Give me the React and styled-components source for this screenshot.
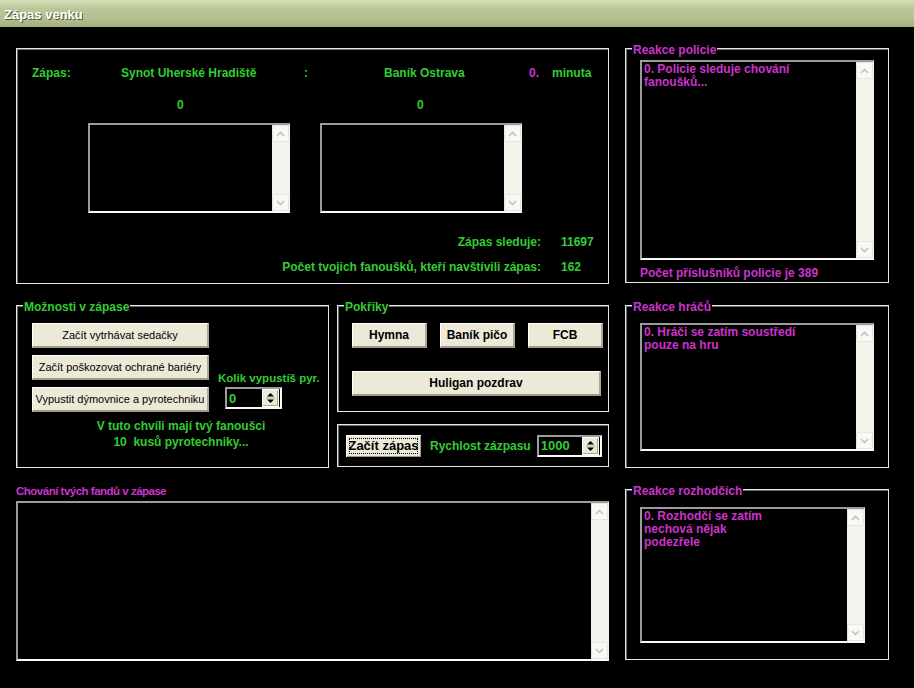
import React from "react";
import styled, { createGlobalStyle } from "styled-components";

const GREEN = "#33cc33";
const MAGENTA = "#cc33cc";

const Global = createGlobalStyle`
  html, body { margin: 0; padding: 0; background: #000; }
  body { font-family: "Liberation Sans", Arial, sans-serif; }
`;

const Window = styled.div`
  width: 914px;
  height: 688px;
  background: #000;
  display: flex;
  flex-direction: column;
  overflow: hidden;
`;

const TitleBar = styled.div`
  height: 27px;
  flex: none;
  box-sizing: border-box;
  display: flex;
  align-items: center;
  padding: 1px 0 0 4px;
  background: linear-gradient(180deg, #d6dfb8 0%, #bcc799 30%, #b3c08f 70%, #a3b07d 100%);
  color: #fff;
  font: bold 13px "Liberation Sans", Arial, sans-serif;
  text-shadow: 1px 1px 0 #4d5530;
`;

const Body = styled.div`
  display: flex;
  gap: 16px;
  padding: 21px 0 0 16px;
`;

const Column = styled.div`
  width: ${(p) => p.$w}px;
  display: flex;
  flex-direction: column;
`;

const Group = styled.div`
  position: relative;
  box-sizing: border-box;
  width: ${(p) => (p.$w ? `${p.$w}px` : "auto")};
  height: ${(p) => p.$h}px;
  margin-top: ${(p) => p.$mt || 0}px;
  border: 1px solid #e6e6e6;
  box-shadow: inset 1px 1px 0 #6a6a6a;
  padding: ${(p) => p.$pad || "0"};
  display: flex;
  flex-direction: column;
  flex: none;
`;

const Legend = styled.span`
  position: absolute;
  top: -6px;
  left: 6px;
  background: #000;
  padding: 0 1px;
  font: bold 12px/14px "Liberation Sans", Arial, sans-serif;
  color: ${(p) => p.$c};
`;

const Label = styled.span`
  font: bold 12px/14px "Liberation Sans", Arial, sans-serif;
  color: ${(p) => p.$c || GREEN};
  white-space: nowrap;
`;

/* Match panel */
const MatchRow = styled.div`
  display: grid;
  grid-template-columns: 89px 183px 80px 145px 23px auto;
  height: 14px;
`;

const ScoreRow = styled.div`
  display: grid;
  grid-template-columns: 202px 202px;
  column-gap: 30px;
  margin: 18px 0 0 56px;
`;

const Score = styled(Label)`
  padding-left: ${(p) => p.$off}px;
`;

const BoxRow = styled.div`
  display: flex;
  gap: 30px;
  margin: 11px 0 0 56px;
`;

const Stats = styled.div`
  display: grid;
  grid-template-columns: 509px auto;
  column-gap: 20px;
  row-gap: 11px;
  margin-top: 22px;
`;

const StatLabel = styled(Label)`
  text-align: right;
`;

/* List box */
const ListBox = styled.div`
  box-sizing: border-box;
  width: ${(p) => p.$w}px;
  height: ${(p) => p.$h}px;
  margin-top: ${(p) => p.$mt || 0}px;
  flex: none;
  display: flex;
  background: #000;
  border-style: solid;
  border-width: 2px 1px 2px 2px;
  border-color: #9c9c9c #f4f4f4 #fafafa #9c9c9c;
`;

const ListText = styled.div`
  flex: 1;
  padding: 1px 2px;
  font: bold 12px/13px "Liberation Sans", Arial, sans-serif;
  color: ${MAGENTA};
  white-space: pre-line;
`;

const Scroll = styled.div`
  width: 17px;
  flex: none;
  background: #f4f4ee;
  display: flex;
  flex-direction: column;
  justify-content: space-between;
`;

const ArrowBtn = styled.div`
  height: 17px;
  box-sizing: border-box;
  border: 1px solid #e6e6de;
  background: #f8f8f4;
  display: flex;
  align-items: center;
  justify-content: center;
`;

const Chevron = ({ down }) => (
  <svg width="9" height="6" viewBox="0 0 9 6">
    <path
      d={down ? "M1 1 L4.5 4.5 L8 1" : "M1 5 L4.5 1.5 L8 5"}
      fill="none"
      stroke="#c4c4bc"
      strokeWidth="1.6"
    />
  </svg>
);

const ScrollBar = () => (
  <Scroll>
    <ArrowBtn>
      <Chevron />
    </ArrowBtn>
    <ArrowBtn>
      <Chevron down />
    </ArrowBtn>
  </Scroll>
);

const List = ({ w, h, mt, children }) => (
  <ListBox $w={w} $h={h} $mt={mt}>
    <ListText>{children}</ListText>
    <ScrollBar />
  </ListBox>
);

/* Buttons */
const Button = styled.button`
  box-sizing: border-box;
  width: ${(p) => p.$w}px;
  height: ${(p) => p.$h || 25}px;
  margin: 0;
  padding: 0;
  background: #ece9d8;
  border-style: solid;
  border-width: 1px 2px 2px 1px;
  border-color: #fff #aca899 #9d9a8a #fff;
  color: #000;
  white-space: nowrap;
  font: ${(p) => (p.$bold ? "bold 12px" : "11px")} "Liberation Sans", Arial, sans-serif;
  cursor: pointer;
`;

const DefaultButton = styled(Button)`
  border: 1px solid #000;
  box-shadow: inset 1px 1px 0 #fff, inset -1px -1px 0 #9d9a8a;
  font-size: 13px;
  position: relative;
  &::after {
    content: "";
    position: absolute;
    inset: 3px;
    border: 1px dotted #000;
  }
`;

/* Options panel */
const OptionsTop = styled.div`
  display: flex;
  gap: 9px;
`;

const ButtonStack = styled.div`
  display: flex;
  flex-direction: column;
  gap: 7px;
`;

const SidePane = styled.div`
  display: flex;
  flex-direction: column;
  align-items: flex-start;
  padding-top: 48px;
  gap: 2px;
`;

const PyroLabel = styled(Label)`
  font-size: 11.5px;
`;

const Caption = styled.div`
  width: 298px;
  margin-top: 7px;
  display: flex;
  flex-direction: column;
  align-items: center;
  gap: 2px;
`;

/* Spin box */
const Spin = styled.div`
  box-sizing: border-box;
  width: ${(p) => p.$w}px;
  height: 22px;
  margin-left: ${(p) => p.$ml || 0}px;
  display: flex;
  align-items: center;
  background: #000;
  border-style: solid;
  border-width: 2px;
  border-color: #9c9c9c #fafafa #fafafa #9c9c9c;
  flex: none;
`;

const SpinValue = styled.span`
  flex: 1;
  padding-left: 2px;
  font: bold 13px "Liberation Sans", Arial, sans-serif;
  color: ${GREEN};
`;

const SpinButtons = styled.div`
  width: 15px;
  height: 16px;
  margin-right: 1px;
  background: #ece9d8;
  border: 1px solid #fff;
  box-shadow: inset -1px -1px 0 #aca899;
  display: flex;
  align-items: center;
  justify-content: center;
`;

const SpinArrows = () => (
  <svg width="9" height="12" viewBox="0 0 9 12">
    <path d="M4.5 1 L8 4.5 L1 4.5 Z" fill="#000" />
    <path d="M1 7.5 L8 7.5 L4.5 11 Z" fill="#000" />
    <line x1="0" y1="6" x2="9" y2="6" stroke="#b8b5a5" strokeWidth="1" />
  </svg>
);

const SpinBox = ({ w, ml, value }) => (
  <Spin $w={w} $ml={ml}>
    <SpinValue>{value}</SpinValue>
    <SpinButtons>
      <SpinArrows />
    </SpinButtons>
  </Spin>
);

/* Chants */
const ChantRow = styled.div`
  display: flex;
  gap: 13px;
  margin-top: ${(p) => p.$mt || 0}px;
`;

const MiddleRow = styled.div`
  display: flex;
  gap: 8px;
  margin-top: 21px;
`;

const Stack = styled.div`
  display: flex;
  flex-direction: column;
  gap: 12px;
`;

const StartRow = styled.div`
  display: flex;
  align-items: center;
  height: 100%;
`;

const StartLabel = styled(Label)`
  margin-left: 8px;
`;

const BottomLabel = styled(Label)`
  display: block;
  margin-top: 16px;
  font-size: 11.5px;
  letter-spacing: -0.5px;
  color: ${MAGENTA};
`;

const FooterText = styled(Label)`
  margin-top: 6px;
  color: ${MAGENTA};
`;

export default function App() {
  return (
    <>
      <Global />
      <Window>
        <TitleBar>Zápas venku</TitleBar>
        <Body>
          <Column $w={593}>
            <Group $h={236} $pad="17px 0 0 15px">
              <MatchRow>
                <Label>Zápas:</Label>
                <Label>Synot Uherské Hradiště</Label>
                <Label>:</Label>
                <Label>Baník Ostrava</Label>
                <Label $c={MAGENTA}>0.</Label>
                <Label>minuta</Label>
              </MatchRow>
              <ScoreRow>
                <Score $off={89}>0</Score>
                <Score $off={97}>0</Score>
              </ScoreRow>
              <BoxRow>
                <List w={202} h={90} />
                <List w={202} h={90} />
              </BoxRow>
              <Stats>
                <StatLabel>Zápas sleduje:</StatLabel>
                <Label>11697</Label>
                <StatLabel>Počet tvojich fanoušků, kteří navštívili zápas:</StatLabel>
                <Label>162</Label>
              </Stats>
            </Group>

            <MiddleRow>
              <Group $w={313} $h={163} $pad="17px 0 0 15px">
                <Legend $c={GREEN}>Možnosti v zápase</Legend>
                <OptionsTop>
                  <ButtonStack>
                    <Button $w={177}>Začít vytrhávat sedačky</Button>
                    <Button $w={177}>Začít poškozovat ochrané bariéry</Button>
                    <Button $w={177}>Vypustit dýmovnice a pyrotechniku</Button>
                  </ButtonStack>
                  <SidePane>
                    <PyroLabel>Kolik vypustíš pyr.</PyroLabel>
                    <SpinBox w={57} ml={7} value="0" />
                  </SidePane>
                </OptionsTop>
                <Caption>
                  <Label>V tuto chvíli mají tvý fanoušci</Label>
                  <Label>10&nbsp;&nbsp;kusů pyrotechniky...</Label>
                </Caption>
              </Group>

              <Stack>
                <Group $w={272} $h={107} $pad="17px 0 0 14px">
                  <Legend $c={GREEN}>Pokřiky</Legend>
                  <ChantRow>
                    <Button $w={75} $bold>Hymna</Button>
                    <Button $w={75} $bold>Baník pičo</Button>
                    <Button $w={75} $bold>FCB</Button>
                  </ChantRow>
                  <ChantRow $mt={23}>
                    <Button $w={249} $bold>Huligan pozdrav</Button>
                  </ChantRow>
                </Group>
                <Group $w={272} $h={43} $pad="0 0 0 7px">
                  <StartRow>
                    <DefaultButton $w={77} $h={24} $bold>
                      Začít zápas
                    </DefaultButton>
                    <StartLabel>Rychlost zázpasu</StartLabel>
                    <SpinBox w={65} ml={6} value="1000" />
                  </StartRow>
                </Group>
              </Stack>
            </MiddleRow>

            <BottomLabel>Chování tvých fandů v zápase</BottomLabel>
            <List w={593} h={160} mt={3} />
          </Column>

          <Column $w={264}>
            <Group $h={235} $pad="11px 0 0 14px">
              <Legend $c={MAGENTA}>Reakce policie</Legend>
              <List w={234} h={200}>
                {"0. Policie sleduje chování\nfanoušků..."}
              </List>
              <FooterText>Počet příslušníků policie je 389</FooterText>
            </Group>

            <Group $h={163} $mt={22} $pad="17px 0 0 14px">
              <Legend $c={MAGENTA}>Reakce hráčů</Legend>
              <List w={234} h={128}>
                {"0. Hráči se zatím soustředí\npouze na hru"}
              </List>
            </Group>

            <Group $h={171} $mt={21} $pad="17px 0 0 14px">
              <Legend $c={MAGENTA}>Reakce rozhodčích</Legend>
              <List w={225} h={136}>
                {"0. Rozhodčí se zatím\nnechová nějak\npodezřele"}
              </List>
            </Group>
          </Column>
        </Body>
      </Window>
    </>
  );
}
